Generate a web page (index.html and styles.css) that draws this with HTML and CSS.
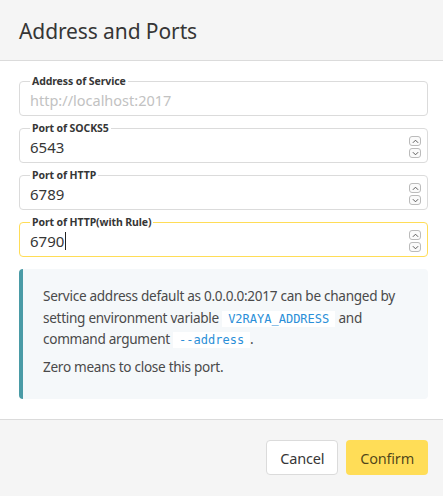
FILE: index.html
```html
<!DOCTYPE html>
<html>
<head>
<meta charset="utf-8">
<link rel="stylesheet" href="styles.css">
</head>
<body>
<div class="modal">
  <header class="head"><h1 class="title">Address and Ports</h1></header>
  <section class="content">
    <fieldset class="field">
      <legend class="label">Address of Service</legend>
      <div class="control"><span class="placeholder">http://localhost:2017</span></div>
    </fieldset>
    <fieldset class="field">
      <legend class="label">Port of SOCKS5</legend>
      <div class="control"><span class="value">6543</span>
        <span class="spin"><span class="sb"><svg viewBox="0 0 8 5" width="7" height="5"><path d="M1 4 L4 1 L7 4" fill="none" stroke="#555" stroke-width="1.1"/></svg></span><span class="sb"><svg viewBox="0 0 8 5" width="7" height="5"><path d="M1 1 L4 4 L7 1" fill="none" stroke="#555" stroke-width="1.1"/></svg></span></span>
      </div>
    </fieldset>
    <fieldset class="field">
      <legend class="label">Port of HTTP</legend>
      <div class="control"><span class="value">6789</span>
        <span class="spin"><span class="sb"><svg viewBox="0 0 8 5" width="7" height="5"><path d="M1 4 L4 1 L7 4" fill="none" stroke="#555" stroke-width="1.1"/></svg></span><span class="sb"><svg viewBox="0 0 8 5" width="7" height="5"><path d="M1 1 L4 4 L7 1" fill="none" stroke="#555" stroke-width="1.1"/></svg></span></span>
      </div>
    </fieldset>
    <fieldset class="field focus">
      <legend class="label">Port of HTTP(with Rule)</legend>
      <div class="control"><span class="value">6790<span class="caret"></span></span>
        <span class="spin"><span class="sb"><svg viewBox="0 0 8 5" width="7" height="5"><path d="M1 4 L4 1 L7 4" fill="none" stroke="#555" stroke-width="1.1"/></svg></span><span class="sb"><svg viewBox="0 0 8 5" width="7" height="5"><path d="M1 1 L4 4 L7 1" fill="none" stroke="#555" stroke-width="1.1"/></svg></span></span>
      </div>
    </fieldset>
    <div class="note">
      <p>Service address default as 0.0.0.0:2017 can be changed by setting environment variable <code>V2RAYA_ADDRESS</code> and command argument <code>--address</code>.</p>
      <p class="p2">Zero means to close this port.</p>
    </div>
  </section>
  <footer class="foot">
    <button class="btn">Cancel</button>
    <button class="btn primary">Confirm</button>
  </footer>
</div>
</body>
</html>
```

FILE: styles.css
```css
* { box-sizing: border-box; }
html, body { margin: 0; padding: 0; background: #fff; }
body { font-family: "Noto Sans", "Open Sans", sans-serif; color: #4a4a4a; width: 443px; height: 496px; overflow: hidden; }
.modal { display: flex; flex-direction: column; height: 496px; }
.head { height: 61px; background: #f5f5f5; border-bottom: 1px solid #dbdbdb; display: flex; align-items: center; padding: 0 19px; }
.title { margin: 0; font-size: 21px; font-weight: 400; color: #363636; letter-spacing: -0.1px; padding-top: 2px; }
.content { flex: 1; padding: 14px 15px 0 19px; }
.field { margin: 0 0 6px 0; padding: 0 6px 0 10px; border: 1px solid #dbdbdb; border-radius: 4px; height: 41px; position: relative; }
.field.focus { border-color: #ffdd57; }
.label { font-size: 10.5px; font-weight: 700; color: #363636; padding: 0 2px; margin-left: 0; line-height: 12px; letter-spacing: -0.1px; }
.control { display: flex; align-items: center; justify-content: space-between; height: 27px; margin-top: -1px; }
.placeholder { font-size: 14.5px; color: #c2c2c2; }
.value { font-size: 15px; color: #363636; display: flex; align-items: center; }
.caret { display: inline-block; width: 1px; height: 18px; background: #222; margin-left: 1px; }
.spin { display: flex; flex-direction: column; gap: 2px; margin-top: 1px; }
.sb { width: 12px; height: 10px; border: 1px solid #bbb; border-radius: 3px; display: flex; align-items: center; justify-content: center; background: #fafafa; }
.note { margin-top: 12px; background: #f5f8fa; border-left: 4px solid #4a9ba6; border-radius: 4px; padding: 16px 10px 17px 20px; height: 130px; font-size: 13.6px; line-height: 21.5px; color: #4a4a4a; letter-spacing: -0.3px; }
.note p { margin: 0; }
.note .p2 { margin-top: 6px; }
code { font-family: "DejaVu Sans Mono", monospace; font-size: 12px; line-height: 14px; color: #2b8fd8; background: #fff; padding: 1px 6px; letter-spacing: 0; }
.foot { height: 77px; background: #f5f5f5; border-top: 1px solid #dbdbdb; display: flex; justify-content: flex-end; align-items: center; gap: 8px; padding: 0 15px 1px 0; }
.btn { font-family: inherit; font-size: 14.5px; height: 35px; border-radius: 4px; border: 1px solid #dbdbdb; background: #fff; color: #363636; padding: 0 13px; letter-spacing: -0.2px; }
.btn.primary { background: #ffdd57; border-color: transparent; color: rgba(0,0,0,0.7); padding: 0 13px; }
```
